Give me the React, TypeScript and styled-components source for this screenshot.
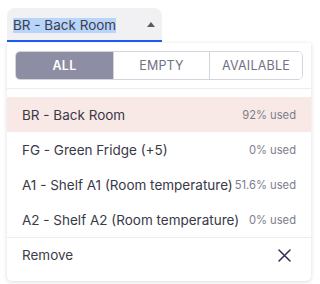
import React, { useState } from "react";
import styled, { createGlobalStyle } from "styled-components";

const GlobalStyle = createGlobalStyle`
  html, body {
    margin: 0;
    padding: 0;
    background: #ffffff;
    font-family: Inter, "Noto Sans", "Liberation Sans", sans-serif;
  }
`;

/**
 * Page wrapper
 */
const Page = styled.div`
  width: 318px;
  height: 284px;
  padding: 8px 7px 0 7px;
  box-sizing: border-box;
  display: flex;
  flex-direction: column;
`;

/**
 * Select field (filled variant)
 */
const Field = styled.div`
  width: 155px;
  height: 34px;
  box-sizing: border-box;
  background-color: #f1f1f4;
  border-radius: 8px 8px 0 0;
  border-bottom: 2px solid #1f5bf5;
  display: flex;
  align-items: center;
  justify-content: space-between;
  padding: 2px 7px 0 6px;
`;

const FieldValue = styled.span`
  font-size: 13.5px;
  color: #3d3d4c;
  background-color: #b7d4fb;
  line-height: 15px;
  padding: 0;
`;

const Arrow = styled.span`
  width: 0;
  height: 0;
  border-left: 4.5px solid transparent;
  border-right: 4.5px solid transparent;
  border-bottom: 5px solid #5a5a60;
  margin-bottom: 2px;
`;

/**
 * Dropdown panel
 */
const Panel = styled.div`
  margin-top: 1px;
  width: 304px;
  height: 238px;
  box-sizing: border-box;
  background: #ffffff;
  border-radius: 0 0 5px 5px;
  box-shadow: 0 1px 4px rgba(30, 30, 60, 0.16);
  display: flex;
  flex-direction: column;
`;

const SegmentWrap = styled.div`
  padding: 8px;
  border-bottom: 1px solid #ececf0;
`;

const Segmented = styled.div`
  display: grid;
  grid-template-columns: 97px 96px 1fr;
  height: 29px;
  border: 1px solid #d4d4dc;
  border-radius: 5px;
  overflow: hidden;
  box-sizing: border-box;
`;

const Segment = styled.button<{ active?: boolean }>`
  border: none;
  border-left: ${props => props.active ? "none" : "1px solid #d4d4dc"};
  &:first-child { border-left: none; }
  background-color: ${props => props.active ? "#8d8ea3" : "#ffffff"};
  color: ${props => props.active ? "#ffffff" : "#707186"};
  font-family: Inter, "Noto Sans", "Liberation Sans", sans-serif;
  font-size: 12.5px;
  font-weight: ${props => props.active ? 600 : 400};
  letter-spacing: 0.2px;
  padding: 0;
  cursor: pointer;
`;

const List = styled.ul`
  list-style: none;
  margin: 0;
  padding: 8px 0 0 0;
`;

const Row = styled.li<{ highlighted?: boolean }>`
  height: 35px;
  display: flex;
  align-items: center;
  justify-content: space-between;
  padding: 0 15px;
  background-color: ${props => props.highlighted ? "#f9e9e6" : "transparent"};
  white-space: nowrap;
`;

const RowLabel = styled.span`
  font-size: 13.5px;
  color: #393947;
`;

const RowUsage = styled.span`
  font-size: 11.2px;
  color: #7c7d8c;
`;

const Divider = styled.div`
  height: 1px;
  background-color: #ececf0;
`;

const RemoveRow = styled.div`
  height: 34px;
  display: flex;
  align-items: center;
  justify-content: space-between;
  padding: 0 20px 0 15px;
`;

const RemoveLabel = styled.span`
  font-size: 13.5px;
  color: #3d3d48;
`;

const CloseIcon = () => (
  <svg width="13" height="13" viewBox="0 0 13 13">
    <path d="M1 1 L12 12 M12 1 L1 12" stroke="#2d2f52" strokeWidth="1.5" strokeLinecap="round" />
  </svg>
);

const rooms = [
  { label: "BR - Back Room", usage: "92% used" },
  { label: "FG - Green Fridge (+5)", usage: "0% used" },
  { label: "A1 - Shelf A1 (Room temperature)", usage: "51.6% used" },
  { label: "A2 - Shelf A2 (Room temperature)", usage: "0% used" },
];

const filters = ["ALL", "EMPTY", "AVAILABLE"];

const App = (): JSX.Element => {
  const [filter, setFilter] = useState("ALL");

  return (
    <Page>
      <GlobalStyle />
      <Field>
        <FieldValue>BR - Back Room</FieldValue>
        <Arrow />
      </Field>
      <Panel>
        <SegmentWrap>
          <Segmented>
            {filters.map(f => (
              <Segment key={f} active={f === filter} onClick={() => setFilter(f)}>{f}</Segment>
            ))}
          </Segmented>
        </SegmentWrap>
        <List>
          {rooms.map((room, i) => (
            <Row key={room.label} highlighted={i === 0}>
              <RowLabel>{room.label}</RowLabel>
              <RowUsage>{room.usage}</RowUsage>
            </Row>
          ))}
        </List>
        <Divider />
        <RemoveRow>
          <RemoveLabel>Remove</RemoveLabel>
          <CloseIcon />
        </RemoveRow>
      </Panel>
    </Page>
  );
};

export default App;
